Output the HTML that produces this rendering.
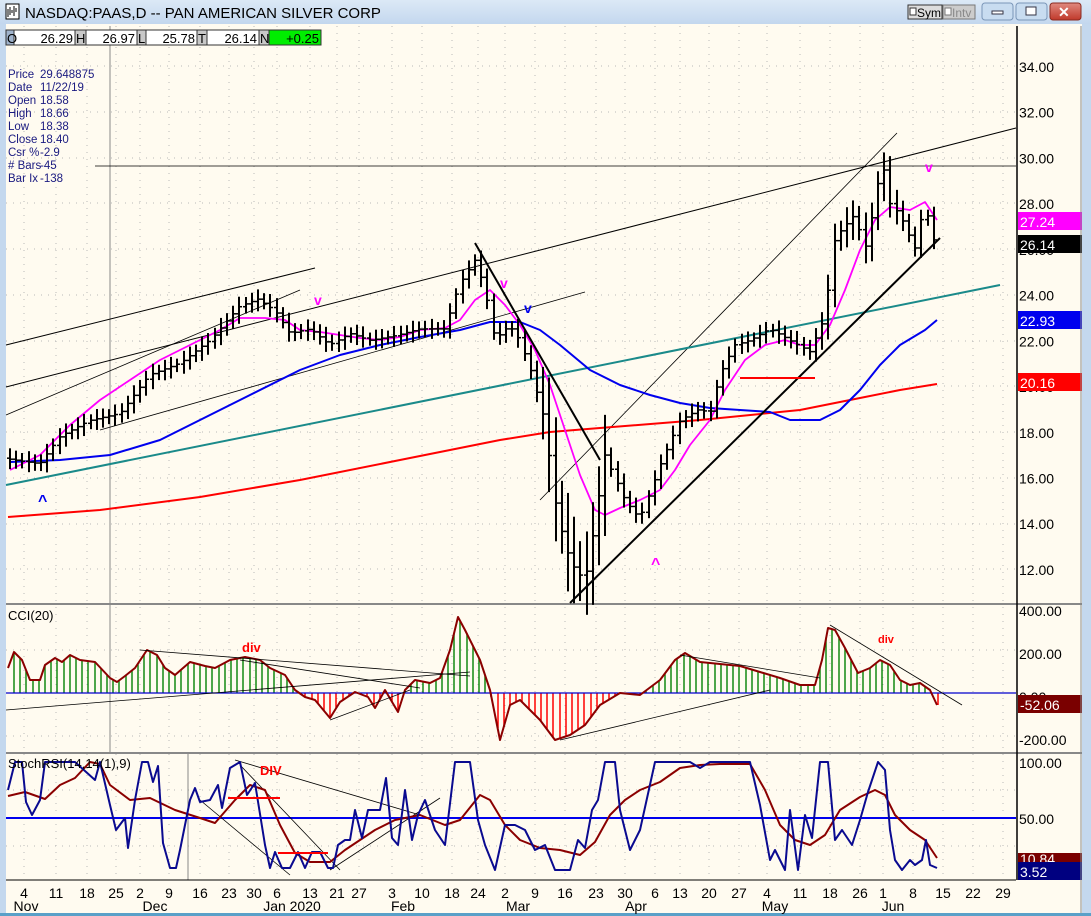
<!DOCTYPE html>
<html><head><meta charset="utf-8"><style>
html,body{margin:0;padding:0;width:1091px;height:916px;overflow:hidden;background:#c4d8ee;font-family:"Liberation Sans",sans-serif}
svg{position:absolute;left:0;top:0}
</style></head><body>
<svg id="s" width="1091" height="916" xmlns="http://www.w3.org/2000/svg" font-family="Liberation Sans, sans-serif">
<defs><linearGradient id="tb" x1="0" y1="0" x2="0" y2="1"><stop offset="0" stop-color="#dce9f6"/><stop offset="1" stop-color="#c3d7ee"/></linearGradient>
<linearGradient id="cb" x1="0" y1="0" x2="0" y2="1"><stop offset="0" stop-color="#e08a80"/><stop offset="1" stop-color="#c0392b"/></linearGradient></defs>
<rect x="0" y="0" width="1091" height="916" fill="#c4d8ee"/>
<rect x="0" y="0" width="1091" height="24" fill="url(#tb)"/>
<rect x="6" y="24" width="1076" height="889" fill="#fffbf0"/>
<rect x="1082" y="24" width="9" height="892" fill="#c4d8ee"/>
<rect x="0" y="913" width="1091" height="3" fill="#5aa0c8"/>
<rect x="6" y="4" width="13" height="15" fill="#fff" stroke="#000"/>
<path d="M8 17V9M10 15V7M12 13V10M14 16V6M16 12V8" stroke="#000"/>
<text x="25" y="18" font-size="15" fill="#000">NASDAQ:PAAS,D -- PAN AMERICAN SILVER CORP</text>
<rect x="908" y="5" width="34" height="14" fill="#ddd" stroke="#333"/><rect x="910" y="8" width="6" height="7" fill="#fff" stroke="#333"/><text x="917" y="17" font-size="12">Sym</text>
<rect x="943" y="5" width="32" height="14" fill="#ccc" stroke="#777"/><rect x="945" y="8" width="6" height="7" fill="#fff" stroke="#777"/><text x="952" y="17" font-size="12" fill="#888">Intv</text>
<rect x="982" y="3" width="31" height="17" rx="3" fill="#c8dcf0" stroke="#7a96b8"/><rect x="992" y="11" width="11" height="3" fill="#fff" stroke="#334"/>
<rect x="1016" y="3" width="31" height="17" rx="3" fill="#c8dcf0" stroke="#7a96b8"/><rect x="1026" y="7" width="10" height="8" fill="#fff" stroke="#334"/>
<rect x="1050" y="3" width="31" height="17" rx="3" fill="url(#cb)" stroke="#8a2a20"/><text x="1058" y="17" font-size="14" font-weight="bold" fill="#fff">✕</text>
<g id="g"></g>
</svg>
<script>
var g=document.getElementById('g'),h='';
function L(x1,y1,x2,y2,c,w,d){h+='<line x1="'+x1+'" y1="'+y1+'" x2="'+x2+'" y2="'+y2+'" stroke="'+c+'" stroke-width="'+(w||1)+'"'+(d?' stroke-dasharray="'+d+'"':'')+'/>';}
function P(pts,c,w){h+='<polyline fill="none" stroke="'+c+'" stroke-width="'+w+'" stroke-linejoin="round" points="'+pts.map(function(p){return p.join(',')}).join(' ')+'"/>';}
function T(x,y,s,sz,c,extra){h+='<text x="'+x+'" y="'+y+'" font-size="'+sz+'" fill="'+(c||'#000')+'" '+(extra||'')+'>'+s+'</text>';}
function R(x,y,w,hh,c,st){h+='<rect x="'+x+'" y="'+y+'" width="'+w+'" height="'+hh+'" fill="'+c+'"'+(st?' stroke="'+st+'"':'')+'/>';}
function interp(k,x){for(var i=0;i<k.length-1;i++){if(x<=k[i+1][0]){var t=(x-k[i][0])/(k[i+1][0]-k[i][0]);return k[i][1]+t*(k[i+1][1]-k[i][1]);}}return k[k.length-1][1];}
var weeks=[24,56,87,116,140,169,200,229,254,277,310,337,359,392,422,452,478,505,535,565,596,625,655,680,709,739,767,800,830,860,883,913,943,973,1003];
var wl=['4','11','18','25','2','9','16','23','30','6','13','21','27','3','10','18','24','2','9','16','23','30','6','13','20','27','4','11','18','26','1','8','15','22','29'];
weeks.forEach(function(x){L(x,26,x,880,'#b8b8b8',1,'1,6');});
[66,112,158,203,249,295,341,386,432,478,524,569].forEach(function(y){L(6,y,1016,y,'#b8b8b8',1,'1,6');});
[650,736,790,846].forEach(function(y){L(6,y,1016,y,'#b8b8b8',1,'1,6');});
L(110,26,110,753,'#888',1);L(188,753,188,880,'#888',1);
L(6,604,1082,604,'#888',2);L(6,753,1082,753,'#888',2);L(6,880,1016,880,'#000',1);L(1017,26,1017,880,'#000',1.5);
var cells=[['O',6,14,'26.29',75],['H',75,86,'26.97',137],['L',137,146,'25.78',197],['T',197,207,'26.14',259],['N',259,269,'+0.25',321]];
cells.forEach(function(c,i){R(c[1],30,c[2]-c[1],15,i==0?'#9fb3cc':'#c8c8c8','#333');R(c[2],30,c[4]-c[2],15,i==4?'#00ee00':'#fff','#333');T(c[1]+1,43,c[0],13);T(c[4]-2,43,c[3],13,'#000','text-anchor="end"');});
var info=[['Price','29.648875'],['Date','11/22/19'],['Open','18.58'],['High','18.66'],['Low','18.38'],['Close','18.40'],['Csr %','-2.9'],['# Bars','-45'],['Bar Ix','-138']];
info.forEach(function(r,i){T(8,78+i*13,r[0],11.5,'#1a1a80');T(40,78+i*13,r[1],11.5,'#1a1a80');});
function py(p){return 66+(34-p)*22.86;}
[34,32,30,28,26,24,22,20,18,16,14,12].forEach(function(p){T(1019,py(p)+6,p.toFixed(2),14);});
L(6,387,1016,128,'#000',1);L(6,345,315,268,'#000',1);L(6,415,300,290,'#000',0.8);L(100,430,585,292,'#000',0.8);
L(95,166,1016,166,'#000',0.8);L(540,500,897,133,'#000',0.8);
L(6,485,1000,285,'#1a8a8a',2);
var red=[[8,517],[100,510],[200,497],[300,480],[400,460],[500,440],[550,432],[600,428],[700,420],[800,410],[850,400],[900,390],[937,384]];
P(red,'#ff0000',2);
var blue=[[10,462],[60,460],[110,455],[160,440],[200,420],[250,395],[300,370],[340,355],[380,345],[420,337],[460,330],[490,322],[520,322],[540,330],[560,345],[590,370],[620,385],[650,395],[680,403],[710,408],[740,410],[770,412],[790,420],[820,420],[840,410],[860,390],[880,365],[900,345],[925,330],[937,320]];
P(blue,'#0000ee',2);
var mag=[[10,470],[40,455],[70,425],[100,400],[130,380],[160,360],[190,345],[220,330],[240,318],[265,318],[285,320],[300,330],[320,332],[340,335],[360,338],[380,340],[400,337],[420,330],[445,328],[460,320],[475,300],[490,290],[505,305],[520,325],[535,350],[550,385],[565,430],[580,475],[595,510],[605,515],[620,508],[640,500],[660,490],[675,470],[690,445],[710,420],[725,390],[745,360],[765,345],[785,340],[800,345],[815,345],[830,325],[845,290],[860,250],[875,220],[890,207],[910,210],[925,202],[937,220]];
P(mag,'#ff00ff',1.8);
var ck=[[10,16.8],[24,16.7],[40,16.6],[60,17.8],[90,18.5],[120,18.8],[150,20.5],[180,21],[210,22],[240,23.5],[258,23.8],[275,23.3],[290,22.3],[310,22.5],[330,21.8],[350,22.3],[370,22.0],[395,22.2],[420,22.5],[445,22.5],[460,24.5],[475,25.5],[485,24.3],[495,22],[505,22.5],[515,22.5],[530,20.8],[545,18.5],[555,15],[565,13],[575,12],[585,11.5],[595,14],[605,17],[615,16],[625,15],[640,14.2],[660,16.5],[680,18.5],[700,19],[710,18.8],[720,20.5],[735,21.8],[750,22],[770,22.5],[790,22],[810,21.5],[825,23],[835,26.5],[845,27],[855,27.5],[865,26],[875,28],[882,30],[890,28],[900,27.5],[915,26],[925,28],[932,26.5],[937,26.2]];
for(var x=10;x<=938;x+=6.2){var c=interp(ck,x),pc=interp(ck,x-6.2);var vol=(x>540&&x<610)?3.2:(x>820&&x<900?1.4:0.8);var r=vol*(0.6+0.5*Math.abs(Math.sin(x*1.7)));var hi=Math.max(c,pc)+r*0.5,lo=Math.min(c,pc)-r*0.5;var xx=Math.round(x);
L(xx,py(hi),xx,py(lo),'#000',2);L(xx-3,py(pc),xx,py(pc),'#000',1.5);L(xx,py(c),xx+3,py(c),'#000',1.5);}
L(475,243,600,460,'#000',2);L(570,603,940,238,'#000',2);
L(740,378,815,378,'#ff0000',2);
T(314,305,'v',14,'#ff00ff','font-weight="bold"');T(500,288,'v',14,'#ff00ff','font-weight="bold"');T(925,172,'v',14,'#ff00ff','font-weight="bold"');T(524,313,'v',14,'#0000ee','font-weight="bold"');
T(38,506,'^',16,'#0000ee','font-weight="bold"');T(651,569,'^',16,'#ff00ff','font-weight="bold"');
R(1018,212,64,18,'#ff00ff');T(1020,227,'27.24',14,'#fff');
R(1018,235,64,18,'#000');T(1020,250,'26.14',14,'#fff');
R(1018,311,64,18,'#0000ee');T(1020,326,'22.93',14,'#fff');
R(1018,373,64,18,'#ff0000');T(1020,388,'20.16',14,'#fff');
T(8,620,'CCI(20)',13);
var cci=[[8,668],[14,652],[22,660],[30,680],[40,680],[45,665],[55,658],[62,662],[70,655],[80,660],[95,662],[110,678],[117,682],[125,676],[135,668],[147,650],[157,655],[165,668],[175,675],[190,662],[205,666],[215,668],[230,660],[245,657],[260,660],[270,668],[285,675],[295,690],[305,697],[315,700],[330,718],[340,702],[355,692],[368,697],[375,708],[385,690],[398,712],[405,690],[415,680],[430,683],[440,678],[450,650],[458,617],[465,630],[480,660],[490,690],[500,740],[510,705],[520,700],[540,720],[555,740],[570,735],[585,725],[600,705],[620,693],[640,695],[660,680],[675,660],[685,653],[700,662],[720,664],[740,666],[760,672],[780,678],[800,685],[815,685],[822,660],[828,628],[835,630],[845,648],[858,673],[870,668],[880,660],[890,665],[900,680],[910,685],[920,683],[930,690],[937,705]];
for(var x=14;x<=938;x+=6.2){var y=interp(cci,x);var xx=Math.round(x);L(xx,693,xx,y,y<693?'#138a13':'#ff0000',1.5);}
L(6,693,1016,693,'#0000cc',1.2);
P(cci,'#8b0000',2);
L(6,710,470,672,'#000',0.8);L(140,650,470,676,'#000',0.8);L(240,660,420,688,'#000',0.8);L(330,720,410,690,'#000',0.8);L(560,740,770,690,'#000',0.8);L(680,655,820,678,'#000',0.8);L(830,625,962,705,'#000',0.8);
T(242,652,'div',13,'#ff0000','font-weight="bold"');T(878,643,'div',11,'#ff0000','font-weight="bold"');
[[400,611],[200,654],[0,697],[-200,740]].forEach(function(a){T(1019,a[1]+5,a[0].toFixed(2),14);});
R(1018,695,64,18,'#7a0000');T(1020,710,'-52.06',14,'#fff');
var sb=[[8,790],[15,762],[22,762],[26,802],[32,815],[40,800],[45,762],[75,762],[95,780],[100,762],[110,805],[116,830],[125,818],[128,848],[135,800],[142,762],[148,762],[153,782],[158,766],[163,843],[170,868],[176,868],[180,850],[190,800],[195,788],[200,802],[210,800],[218,785],[222,808],[230,768],[240,762],[247,795],[255,783],[265,845],[270,868],[275,852],[282,868],[290,868],[298,852],[305,868],[312,852],[320,852],[328,868],[333,868],[338,845],[345,840],[350,840],[355,810],[362,838],[368,810],[380,810],[386,778],[392,838],[398,845],[405,790],[412,840],[418,815],[425,800],[435,830],[445,845],[455,762],[470,762],[478,820],[485,845],[495,870],[505,825],[515,825],[525,830],[535,850],[545,845],[555,870],[570,870],[578,840],[585,848],[592,810],[598,800],[605,762],[615,762],[620,810],[630,850],[640,830],[655,762],[690,762],[700,768],[710,762],[750,762],[760,805],[770,860],[775,850],[785,870],[790,810],[798,870],[805,815],[812,838],[820,762],[828,762],[835,840],[842,830],[852,845],[860,820],[868,792],[878,762],[885,770],[890,830],[895,860],[902,870],[910,860],[915,865],[922,860],[926,840],[930,865],[937,868]];
var sr=[[8,796],[25,792],[45,799],[60,785],[75,778],[90,762],[100,764],[110,785],[130,800],[150,798],[175,810],[200,818],[215,823],[235,800],[250,785],[265,790],[280,825],[295,853],[310,862],[330,862],[345,850],[360,840],[375,830],[395,820],[420,815],[445,825],[460,820],[480,795],[490,800],[505,825],[520,840],[540,848],[560,850],[580,855],[595,842],[610,815],[625,800],[640,790],[660,782],[680,768],[700,765],[720,764],[750,764],[765,790],[780,825],[795,840],[810,845],[825,835],[840,810],[860,797],[875,790],[885,795],[895,815],[910,830],[925,840],[937,858]];
L(6,818,1016,818,'#0000ee',2);
L(235,760,420,815,'#000',0.8);L(200,800,290,875,'#000',0.8);L(240,765,340,870,'#000',0.8);L(330,870,440,798,'#000',0.8);
P(sr,'#8b0000',2);P(sb,'#0a0a90',2);
L(228,798,280,798,'#ff0000',2);L(278,853,328,853,'#ff0000',2);
T(8,768,'StochRSI(14,14(1),9)',13);
T(260,775,'DIV',13,'#ff0000','font-weight="bold"');
[[100,762],[50,818]].forEach(function(a){T(1019,a[1]+6,a[0].toFixed(2),14);});
R(1018,853,64,11,'#7a0000');T(1020,864,'10.84',14,'#fff');
R(1018,862,64,18,'#000080');T(1020,877,'3.52',14,'#fff');
weeks.forEach(function(x,i){T(x,898,wl[i],14,'#000','text-anchor="middle"');});
[['Nov',26],['Dec',155],['Jan 2020',292],['Feb',403],['Mar',518],['Apr',636],['May',775],['Jun',893]].forEach(function(m){T(m[1],911,m[0],14,'#000','text-anchor="middle"');});
L(1081,26,1081,913,'#888',1);
g.innerHTML=h;
</script>
</body></html>
